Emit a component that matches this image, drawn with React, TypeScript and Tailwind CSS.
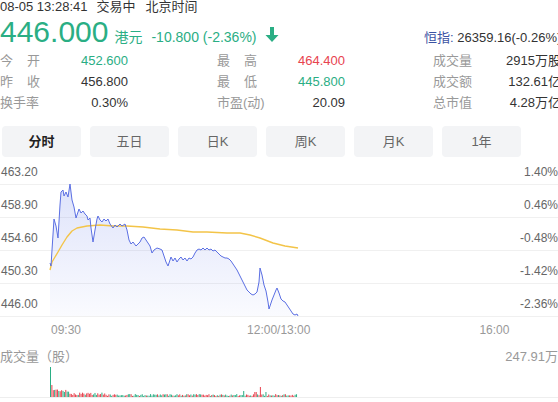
import React from "react";

const GREEN = "#2aae84";
const RED = "#e8434f";

const bluePts: [number, number][] = [
  [50, 263], [51, 266], [52, 250], [54, 219], [56, 226], [58, 238], [60, 205], [61, 192], [63, 190], [64, 196], [66, 192], [68, 197], [70, 184], [72, 200], [74, 207], [76, 218], [78, 212], [79, 209], [81, 213], [83, 211], [85, 214], [87, 216], [88, 220], [90, 218], [91, 228], [93, 242], [95, 230], [97, 219], [98, 216], [100, 220], [102, 222], [104, 219], [106, 221], [108, 219], [110, 224], [113, 228], [115, 225], [117, 227], [120, 224], [122, 226], [125, 224], [127, 230], [129, 240], [131, 244], [133, 242], [136, 246], [138, 244], [140, 242], [142, 238], [144, 237], [146, 240], [148, 243], [150, 246], [152, 253], [154, 250], [157, 248], [160, 249], [162, 250], [164, 256], [166, 262], [168, 266], [170, 260], [171, 257], [173, 261], [175, 258], [177, 262], [179, 259], [181, 257], [183, 260], [185, 258], [187, 261], [189, 258], [191, 259], [193, 257], [195, 253], [197, 250], [199, 249], [201, 250], [203, 248], [205, 250], [207, 248], [209, 250], [211, 249], [213, 251], [215, 250], [217, 252], [219, 254], [221, 256], [223, 257], [225, 258], [227, 258], [229, 259], [231, 261], [233, 264], [235, 267], [237, 270], [239, 274], [241, 278], [243, 282], [245, 286], [247, 290], [249, 292], [251, 294], [253, 295], [255, 294], [257, 292], [259, 282], [260, 268], [262, 275], [264, 285], [266, 291], [268, 302], [269, 309], [271, 303], [272, 300], [274, 295], [276, 290], [277, 288], [279, 293], [281, 299], [283, 301], [285, 302], [287, 305], [289, 308], [291, 311], [293, 314], [295, 315], [297, 314], [298, 316],
];

const yellowPts: [number, number][] = [
  [50, 270], [52, 262], [55, 257], [58, 252], [62, 245], [67, 237], [72, 231], [77, 228], [82, 227], [87, 226], [100, 225], [113, 226], [127, 226], [143, 227], [160, 229], [177, 230], [193, 232], [207, 232], [227, 233], [240, 233], [250, 235], [260, 238], [273, 243], [285, 246], [298, 248],
];

const toStr = (pts: [number, number][]) => pts.map((p) => `${p[0]},${p[1]}`).join(" ");

type Bar = { x: number; h: number; up: boolean };
const bars: Bar[] = (() => {
  let s = 987654;
  const rnd = () => {
    s = (s * 16807) % 2147483647;
    return s / 2147483647;
  };
  const out: Bar[] = [];
  const n = 178;
  for (let i = 0; i < n; i++) {
    const x = 50 + i * 1.39;
    let h: number;
    if (i === 0) h = 30;
    else if (i === 1) h = 12;
    else if (i < 14) h = 5 + rnd() * 3;
    else if (i < 40) h = 2 + rnd() * 2.5;
    else h = 1 + rnd() * 2;
    let up = rnd() > 0.5;
    if (i === 0) up = false;
    if (i >= 1 && i < 10) up = i % 3 !== 0;
    if (Math.abs(x - 243) < 1) { h = 6; up = false; }
    if (Math.abs(x - 255) < 1) { h = 5; up = true; }
    if (Math.abs(x - 260) < 0.8) { h = 10; up = true; }
    if (Math.abs(x - 265) < 0.8) { h = 5; up = false; }
    out.push({ x, h, up });
  }
  return out;
})();

function DownArrow() {
  return (
    <svg width="14" height="15" viewBox="0 0 14 15" className="flex-none">
      <path d="M5 0 H9 V8 H13.5 L7 15 L0.5 8 H5 Z" fill={GREEN} />
    </svg>
  );
}

const stats = [
  [
    { l: ["今", "开"], v: "452.600", c: "text-[#2aae84]" },
    { l: ["最", "高"], v: "464.400", c: "text-[#e8434f]" },
    { l: ["成交量"], v: "2915万股", c: "text-[#333]" },
  ],
  [
    { l: ["昨", "收"], v: "456.800", c: "text-[#333]" },
    { l: ["最", "低"], v: "445.800", c: "text-[#2aae84]" },
    { l: ["成交额"], v: "132.61亿", c: "text-[#333]" },
  ],
  [
    { l: ["换手率"], v: "0.30%", c: "text-[#333]" },
    { l: ["市盈(动)"], v: "20.09", c: "text-[#333]" },
    { l: ["总市值"], v: "4.28万亿", c: "text-[#333]" },
  ],
];

const tabs = ["分时", "五日", "日K", "周K", "月K", "1年"];

const rows = [
  { l: "463.20", r: "1.40%", h: "h-[28px]" },
  { l: "458.90", r: "0.46%", h: "h-[33px]" },
  { l: "454.60", r: "-0.48%", h: "h-[33px]" },
  { l: "450.30", r: "-1.42%", h: "h-[33px]" },
  { l: "446.00", r: "-2.36%", h: "h-[33px]" },
];

export default function App() {
  return (
    <div className="w-[558px] h-[402px] overflow-hidden bg-white text-[#333] font-['Liberation_Sans','Noto_Sans_CJK_SC',sans-serif]">
      <div className="h-[16px] flex whitespace-nowrap text-[13px] leading-[14px] text-[#333]">
        <span>08-05 13:28:41</span>
        <span className="ml-[9px]">交易中</span>
        <span className="ml-[10px]">北京时间</span>
      </div>
      <div className="mt-[1px] h-[30px] flex items-baseline whitespace-nowrap leading-[30px]">
        <div className="w-[424px] flex-none flex items-baseline">
          <span className="text-[30px] text-[#2aae84]">446.000</span>
          <span className="ml-[6px] text-[14px] text-[#2aae84]">港元</span>
          <span className="ml-[9px] text-[14px] text-[#2aae84]">-10.800 (-2.36%)</span>
          <span className="ml-[8px]">
            <DownArrow />
          </span>
        </div>
        <div className="flex-none text-[13px] text-[#333]">
          <span className="text-[#3b52a3]">恒指:</span> 26359.16(-0.26%)
        </div>
      </div>
      <div className="mt-[3px]">
        {stats.map((row, ri) => (
          <div key={ri} className="flex h-[21px] leading-[21px] text-[13px] whitespace-nowrap">
            {row.map((cell, ci) => (
              <div key={ci} className={`flex flex-none ${ci === 0 ? "w-[217px]" : "w-[216px]"}`}>
                <div className="w-[40px] flex-none flex justify-between text-[#999]">
                  {cell.l.map((t, ti) => (
                    <span key={ti}>{t}</span>
                  ))}
                </div>
                <div className={`w-[88px] flex-none text-right ${cell.c}`}>{cell.v}</div>
              </div>
            ))}
          </div>
        ))}
      </div>
      <div className="mt-[13px] pl-[2px] flex gap-[9px]">
        {tabs.map((t, i) => (
          <div
            key={t}
            className={`w-[79px] h-[31px] flex-none rounded-[4px] bg-[#f3f4f6] flex items-center justify-center text-[13px] ${
              i === 0 ? "font-bold text-[#222]" : "text-[#666]"
            }`}
          >
            {t}
          </div>
        ))}
      </div>
      <div className="relative h-[160px]">
        {rows.map((r) => (
          <div
            key={r.l}
            className={`${r.h} border-b border-[#f0f0f0] flex items-end justify-between pb-[4px] pl-[1px] text-[12px] leading-[16px] text-[#666]`}
          >
            <span>{r.l}</span>
            <span>{r.r}</span>
          </div>
        ))}
        <svg className="absolute inset-0" width="558" height="160" viewBox="0 157 558 160">
          <defs>
            <linearGradient id="fillg" x1="0" y1="184" x2="0" y2="316" gradientUnits="userSpaceOnUse">
              <stop offset="0" stopColor="#5b73e8" stopOpacity="0.2" />
              <stop offset="1" stopColor="#5b73e8" stopOpacity="0.03" />
            </linearGradient>
          </defs>
          <polygon points={`${toStr(bluePts)} 298,316 50,316`} fill="url(#fillg)" />
          <polyline points={toStr(yellowPts)} fill="none" stroke="#f3c448" strokeWidth="1.4" strokeLinejoin="round" />
          <polyline points={toStr(bluePts)} fill="none" stroke="#5b6fe3" strokeWidth="1" strokeLinejoin="round" />
        </svg>
      </div>
      <div className="h-[26px] pt-[5px] flex whitespace-nowrap text-[12px] leading-[16px] text-[#999]">
        <span className="ml-[51px]">09:30</span>
        <span className="ml-[166px]">12:00/13:00</span>
        <span className="ml-[169px]">16:00</span>
      </div>
      <div className="h-[22px] pt-[6px] flex justify-between whitespace-nowrap text-[13px] leading-[16px] text-[#999]">
        <span>成交量（股）</span>
        <span>247.91万</span>
      </div>
      <svg width="558" height="37" viewBox="0 365 558 37" className="block">
        <line x1="0" y1="397.5" x2="558" y2="397.5" stroke="#eeeeee" strokeWidth="1" />
        {bars.map((b, i) => (
          <rect key={i} x={b.x} y={397 - b.h} width="1" height={b.h} fill={b.up ? RED : GREEN} />
        ))}
      </svg>
    </div>
  );
}
